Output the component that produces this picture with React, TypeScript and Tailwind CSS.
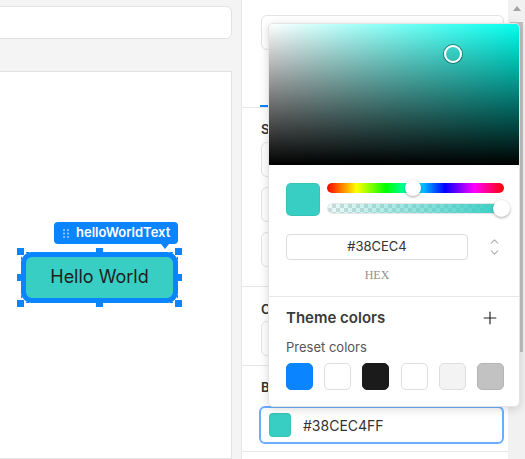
import React from 'react';
import { Plus, ChevronUp, ChevronDown } from 'lucide-react';

const presets = [
  'bg-[#0a84ff] border-[#0a84ff]',
  'bg-white border-[#dedede]',
  'bg-[#1b1b1b] border-[#1b1b1b]',
  'bg-white border-[#dedede]',
  'bg-[#f3f3f3] border-[#dedede]',
  'bg-[#c2c2c2] border-[#b5b5b5]',
];

const DragDots = () => (
  <svg width="6" height="9" viewBox="0 0 6 9" className="opacity-70">
    {[1, 4.5, 8].map((y) => (
      <g key={y}>
        <circle cx="1" cy={y} r="0.9" fill="white" />
        <circle cx="5" cy={y} r="0.9" fill="white" />
      </g>
    ))}
  </svg>
);

const SelectedNode = () => (
  <div className="absolute left-[30px] top-[150px] flex flex-col items-end">
    {/* name tag */}
    <div className="relative flex h-[22px] w-[124px] items-center gap-[7px] rounded-[4px] bg-[#0a84ff] pl-[9px] text-[13px] font-semibold text-white">
      <DragDots />
      <span>helloWorldText</span>
      <div className="absolute -bottom-[5px] right-[9px] h-0 w-0 border-x-[4px] border-t-[5px] border-x-transparent border-t-[#0a84ff]" />
    </div>

    <div className="relative mt-[8px] h-[51px] w-[157px]">
      <div className="absolute inset-0 border border-dashed border-[#0a84ff]" />
      <div className="absolute inset-0 flex items-center justify-center rounded-[11px] border-[5px] border-[#0a84ff] bg-[#38CEC4] pb-[2px] text-[18px] text-[#1e1e1e]">
        Hello World
      </div>
      <div className="absolute left-[-4px] top-[-4px] h-[7px] w-[7px] bg-[#0a84ff]" />
      <div className="absolute left-[75px] top-[-4px] h-[7px] w-[7px] bg-[#0a84ff]" />
      <div className="absolute right-[-4px] top-[-4px] h-[7px] w-[7px] bg-[#0a84ff]" />
      <div className="absolute left-[-4px] top-[22px] h-[7px] w-[7px] bg-[#0a84ff]" />
      <div className="absolute right-[-4px] top-[22px] h-[7px] w-[7px] bg-[#0a84ff]" />
      <div className="absolute bottom-[-4px] left-[-4px] h-[7px] w-[7px] bg-[#0a84ff]" />
      <div className="absolute bottom-[-4px] left-[75px] h-[7px] w-[7px] bg-[#0a84ff]" />
      <div className="absolute bottom-[-4px] right-[-4px] h-[7px] w-[7px] bg-[#0a84ff]" />
    </div>
  </div>
);

const ColorPopover = () => (
  <div className="absolute left-[26px] top-[23px] w-[252px] rounded-[5px] border border-[#e4e4e4] bg-white shadow-[0_2px_10px_rgba(0,0,0,0.15)]">
    {/* saturation / value area */}
    <div className="relative h-[141px] rounded-t-[4px] bg-[linear-gradient(to_top,#000,transparent),linear-gradient(to_right,#fff,#00ffee)]">
      <div className="absolute left-[175px] top-[21px] h-[18px] w-[18px] rounded-full border-2 border-white ring-1 ring-black/40" />
    </div>

    <div className="pl-[17px] pr-[15px] pt-[18px] pb-[14px]">
      <div className="flex gap-[7px]">
        <div className="h-[33px] w-[34px] rounded-[5px] border border-black/5 bg-[#38CEC4]" />
        <div className="flex flex-1 flex-col">
          <div className="relative h-[10px] rounded-full bg-[linear-gradient(to_right,#f00,#ff0,#0f0,#0ff,#00f,#f0f,#f00)]">
            <div className="absolute left-[78px] top-[-3px] h-[16px] w-[16px] rounded-full bg-white shadow-[0_1px_3px_rgba(0,0,0,0.35)]" />
          </div>
          <div className="relative mt-[10px] h-[11px] rounded-full border border-[#e6e6e6] bg-[repeating-conic-gradient(#dcdcdc_0%_25%,#fff_0%_50%)] bg-[length:8px_8px]">
            <div className="absolute inset-0 rounded-full bg-[linear-gradient(to_right,rgba(56,206,196,0.1),#38CEC4)]" />
            <div className="absolute left-[165px] top-[-4px] h-[17px] w-[17px] rounded-full bg-white shadow-[0_1px_3px_rgba(0,0,0,0.35)]" />
          </div>
        </div>
      </div>

      <div className="mt-[18px] flex items-center">
        <div className="flex h-[26px] w-[182px] items-center justify-center rounded-[4px] border border-[#dcdcdc] text-[13px] text-[#333]">
          #38CEC4
        </div>
        <div className="ml-auto mr-[3px] flex flex-col items-center text-[#b0b0b0]">
          <ChevronUp size={13} strokeWidth={2} className="-mb-[2px]" />
          <ChevronDown size={13} strokeWidth={2} />
        </div>
      </div>
      <div className="mt-[8px] w-[182px] text-center font-['Liberation_Serif',serif] text-[12px] leading-[14px] text-[#8f8f8f]">
        HEX
      </div>
    </div>

    <div className="border-t border-[#e8e8e8] pl-[17px] pr-[15px] pt-[11px] pb-[16px]">
      <div className="flex h-[20px] items-center justify-between">
        <span className="text-[15px] font-semibold leading-[20px] text-[#3a3a3a]">Theme colors</span>
        <Plus size={20} strokeWidth={1.4} className="mr-[4px] text-[#222]" />
      </div>
      <div className="mt-[10px] text-[13px] leading-[18px] text-[#555]">Preset colors</div>
      <div className="mt-[7px] flex justify-between">
        {presets.map((c, i) => (
          <div key={i} className={`h-[27px] w-[27px] rounded-[5px] border ${c}`} />
        ))}
      </div>
    </div>
  </div>
);

export default function App() {
  return (
    <div className="flex h-[459px] w-[525px] overflow-hidden bg-white font-['Inter',sans-serif]">
      {/* left: canvas */}
      <div className="flex w-[242px] shrink-0 flex-col border-r border-[#e6e6e6] bg-[#f4f4f4] pr-[9px] pt-[6px]">
        <div className="-ml-[10px] h-[33px] rounded-md border border-[#e2e2e2] bg-white" />
        <div className="relative -ml-[10px] mt-[32px] flex-1 border border-[#e2e2e2] bg-white">
          <SelectedNode />
        </div>
      </div>

      {/* right: properties */}
      <div className="relative flex flex-1">
        <div className="flex flex-1 flex-col">
          <div className="pl-[19px] pr-[4px] pt-[15px]">
            <div className="h-[35px] rounded-md border border-[#e3e3e3]" />
          </div>
          <div className="flex h-[58px] items-end border-b border-[#e6e6e6] pl-[18px]">
            <div className="h-[2px] w-[40px] bg-[#0a84ff]" />
          </div>

          <div className="border-b border-[#e6e6e6] pl-[19px] pr-[4px] pt-[13px] pb-[19px]">
            <div className="text-[13px] font-semibold leading-[16px] text-[#333]">Size</div>
            <div className="mt-[5px] flex flex-col gap-[10px]">
              <div className="h-[35px] rounded-md border border-[#e3e3e3]" />
              <div className="h-[35px] rounded-md border border-[#e3e3e3]" />
              <div className="h-[35px] rounded-md border border-[#e3e3e3]" />
            </div>
          </div>

          <div className="border-b border-[#e6e6e6] pl-[19px] pr-[4px] pt-[14px] pb-[9px]">
            <div className="text-[13px] font-semibold leading-[16px] text-[#333]">Color</div>
            <div className="mt-[4px] h-[35px] rounded-md border border-[#e3e3e3]" />
          </div>

          <div className="border-b border-[#e6e6e6] pl-[17px] pr-[4px] pt-[13px] pb-[7px]">
            <div className="pl-[2px] text-[13px] font-semibold leading-[16px] text-[#333]">Background</div>
            <div className="mt-[11px] flex h-[38px] items-center gap-[12px] rounded-md border-2 border-[#6aaeff] pl-[8px] text-[14px] text-[#333]">
              <div className="h-[24px] w-[22px] rounded-[4px] border border-black/5 bg-[#38CEC4]" />
              <span>#38CEC4FF</span>
            </div>
          </div>
        </div>

        {/* scrollbar */}
        <div className="flex w-[17px] shrink-0 flex-col bg-[#f1f1f1]">
          <div className="flex h-[17px] items-center justify-center">
            <div className="h-0 w-0 border-x-[4px] border-b-[5px] border-x-transparent border-b-[#a3a3a3]" />
          </div>
          <div className="mx-[2px] mt-[5px] h-[330px] bg-[#c1c1c1]" />
        </div>

        <ColorPopover />
      </div>
    </div>
  );
}
